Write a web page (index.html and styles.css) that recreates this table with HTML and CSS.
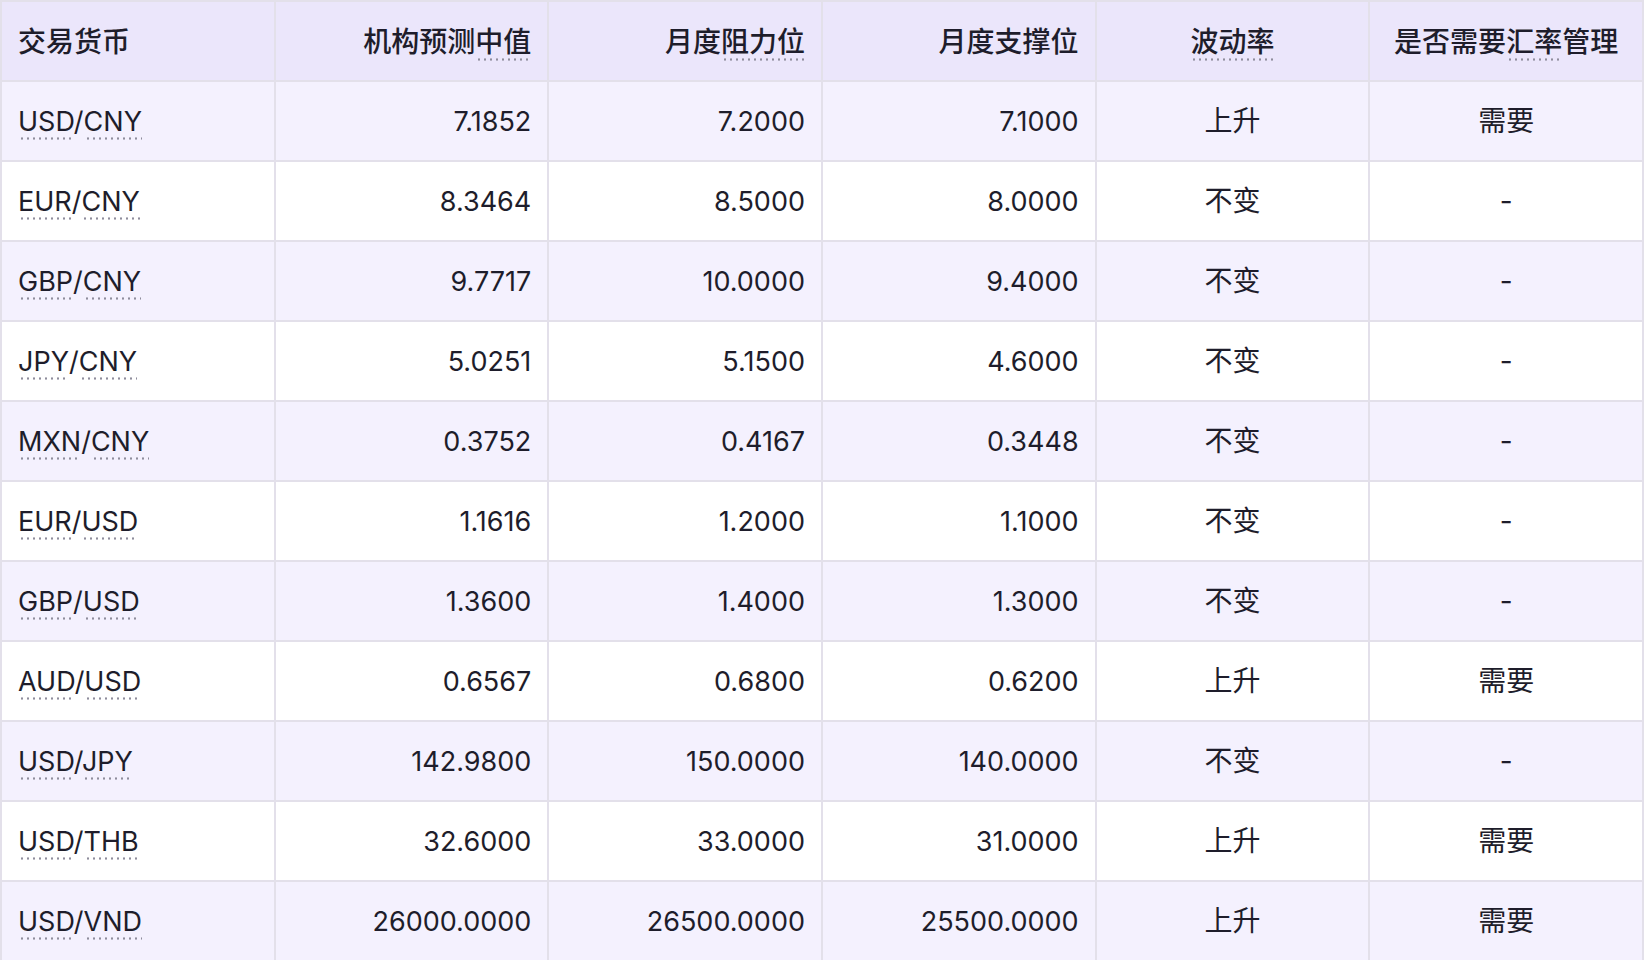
FILE: index.html
```html
<!DOCTYPE html>
<html lang="zh-CN">
<head>
<meta charset="utf-8">
<title>汇率预测</title>
<link rel="stylesheet" href="styles.css">
</head>
<body>
<table class="fx">
  <thead>
    <tr>
      <th class="l">交易货币</th>
      <th class="r">机构预测<span class="term">中值</span></th>
      <th class="r">月度<span class="term">阻力位</span></th>
      <th class="r">月度支撑位</th>
      <th class="c"><span class="term">波动率</span></th>
      <th class="c">是否需要<span class="term">汇率</span>管理</th>
    </tr>
  </thead>
  <tbody>
    <tr><td class="l"><span class="term">USD</span>/<span class="term">CNY</span></td><td class="r">7.1852</td><td class="r">7.2000</td><td class="r">7.1000</td><td class="c">上升</td><td class="c">需要</td></tr>
    <tr><td class="l"><span class="term">EUR</span>/<span class="term">CNY</span></td><td class="r">8.3464</td><td class="r">8.5000</td><td class="r">8.0000</td><td class="c">不变</td><td class="c">-</td></tr>
    <tr><td class="l"><span class="term">GBP</span>/<span class="term">CNY</span></td><td class="r">9.7717</td><td class="r">10.0000</td><td class="r">9.4000</td><td class="c">不变</td><td class="c">-</td></tr>
    <tr><td class="l"><span class="term">JPY</span>/<span class="term">CNY</span></td><td class="r">5.0251</td><td class="r">5.1500</td><td class="r">4.6000</td><td class="c">不变</td><td class="c">-</td></tr>
    <tr><td class="l"><span class="term">MXN</span>/<span class="term">CNY</span></td><td class="r">0.3752</td><td class="r">0.4167</td><td class="r">0.3448</td><td class="c">不变</td><td class="c">-</td></tr>
    <tr><td class="l"><span class="term">EUR</span>/<span class="term">USD</span></td><td class="r">1.1616</td><td class="r">1.2000</td><td class="r">1.1000</td><td class="c">不变</td><td class="c">-</td></tr>
    <tr><td class="l"><span class="term">GBP</span>/<span class="term">USD</span></td><td class="r">1.3600</td><td class="r">1.4000</td><td class="r">1.3000</td><td class="c">不变</td><td class="c">-</td></tr>
    <tr><td class="l"><span class="term">AUD</span>/<span class="term">USD</span></td><td class="r">0.6567</td><td class="r">0.6800</td><td class="r">0.6200</td><td class="c">上升</td><td class="c">需要</td></tr>
    <tr><td class="l"><span class="term">USD</span>/<span class="term">JPY</span></td><td class="r">142.9800</td><td class="r">150.0000</td><td class="r">140.0000</td><td class="c">不变</td><td class="c">-</td></tr>
    <tr><td class="l"><span class="term">USD</span>/<span class="term">THB</span></td><td class="r">32.6000</td><td class="r">33.0000</td><td class="r">31.0000</td><td class="c">上升</td><td class="c">需要</td></tr>
    <tr><td class="l"><span class="term">USD</span>/<span class="term">VND</span></td><td class="r">26000.0000</td><td class="r">26500.0000</td><td class="r">25500.0000</td><td class="c">上升</td><td class="c">需要</td></tr>
  </tbody>
</table>
</body>
</html>
```
FILE: styles.css
```css
html, body {
  margin: 0;
  padding: 0;
  background: #ffffff;
}

body {
  font-family: Inter, "Noto Sans CJK SC", sans-serif;
  color: #1e1d2b;
  overflow: hidden;
}

.fx {
  width: 1644px;
  table-layout: fixed;
  border-collapse: separate;
  border-spacing: 0;
  border-top: 2px solid #e3e0ea;
  border-left: 2px solid #e3e0ea;
}

.fx th,
.fx td {
  height: 76px;
  padding: 2px 16px 0;
  border-right: 2px solid #e3e0ea;
  border-bottom: 2px solid #e3e0ea;
  font-size: 27px;
  line-height: 1.2;
  vertical-align: middle;
  white-space: nowrap;
  box-sizing: content-box;
}

.fx th {
  background: #ebe6fb;
  font-weight: 500;
  font-size: 28px;
  padding-top: 3px;
  height: 75px;
}

.fx td {
  font-weight: 400;
}

.fx td.c {
  font-size: 28px;
}

.fx tbody tr:nth-child(odd) td {
  background: #f4f1fe;
}

.fx tbody tr:nth-child(even) td {
  background: #ffffff;
}

.l { text-align: left; }
.r { text-align: right; }
.c { text-align: center; }

.term {
  padding-bottom: 2px;
  background-image: radial-gradient(circle, #8f8d9c 0, #8f8d9c 0.9px, rgba(143, 141, 156, 0) 1.4px);
  background-size: 6px 3px;
  background-repeat: repeat-x;
  background-position: 1px 100%;
}
```
